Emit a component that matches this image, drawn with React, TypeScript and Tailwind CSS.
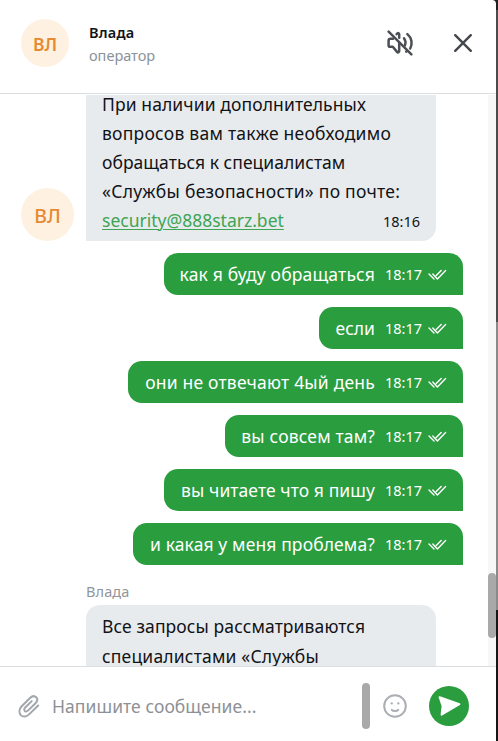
import type { ReactNode } from 'react';

interface OutgoingMessage {
  text: string;
  box: string;
  tracking: string;
}

const outgoing: OutgoingMessage[] = [
  { text: 'как я буду обращаться', box: 'w-[299px]', tracking: 'tracking-[0.17px]' },
  { text: 'если', box: 'w-[144px]', tracking: 'tracking-[0px]' },
  { text: 'они не отвечают 4ый день', box: 'w-[335px]', tracking: 'tracking-[0.2px]' },
  { text: 'вы совсем там?', box: 'w-[238px]', tracking: 'tracking-[0.16px]' },
  { text: 'вы читаете что я пишу', box: 'w-[299px]', tracking: 'tracking-[0.08px]' },
  { text: 'и какая у меня проблема?', box: 'w-[330px]', tracking: 'tracking-[0.12px]' },
];

function Line({ tracking, children }: { tracking: string; children: ReactNode }) {
  return <span className={`block whitespace-nowrap ${tracking}`}>{children}</span>;
}

function ReadMark() {
  return (
    <svg width="19" height="12" viewBox="0 0 19 12" fill="none" stroke="white" strokeWidth="1.4" strokeLinecap="round" strokeLinejoin="round">
      <path d="M1 5 6 10 M4.8 5 9.4 10 17.6 1.4 M8.2 6.6 13.2 1.6" />
    </svg>
  );
}

function MutedIcon() {
  return (
    <svg width="28" height="28" viewBox="0 0 28 28" fill="none" stroke="#4b4e54" strokeWidth="2.5" strokeLinecap="round" strokeLinejoin="round">
      <path d="M2.6 2.6 25.4 25.4" />
      <path d="M7 9.8H4.2C3.2 9.8 2.6 10.4 2.6 11.4V16.2C2.6 17.2 3.2 17.8 4.2 17.8H6.8L11 22.9C11.8 23.8 13.2 23.4 13.2 22.1V13.8" />
      <path d="M10.6 5.1 11.4 4.4C12.3 3.7 13.2 4.3 13.2 5.5V8.7" />
      <path d="M18 9.3C19.4 11.1 19.8 14.1 19 16.3" />
      <path d="M21.4 5.1C26 8.9 26.6 15.1 24.2 19.5 M20.8 22.1 20.2 22.7" />
    </svg>
  );
}

function ClipIcon() {
  return (
    <svg width="22" height="24" viewBox="0 0 22 24" fill="none" stroke="#a3a7ab" strokeWidth="2" strokeLinecap="round" strokeLinejoin="round">
      <path d="M20.2 11.5 11.3 20.1C8.6 22.7 5.1 23.3 2.8 21.1 .8 18.8 1.1 15.1 3.5 12.5L12 4C14 2 16.5 1.6 18.2 3.3 19.8 4.9 19.4 7.3 17.5 9.2L10.2 16.4C9.1 17.5 7.7 17.7 6.8 16.9 5.9 16 6.1 14.6 7.2 13.5L13.7 7.1" />
    </svg>
  );
}

export default function App() {
  return (
    <div className="flex h-[741px] w-[498px] overflow-hidden bg-[#202020] font-['Noto_Sans',sans-serif] text-[#111316]">
      <div className="flex w-[496px] flex-col rounded-tr-[4px] bg-white">
        <header className="flex h-[94px] shrink-0 items-center border-b border-[#dcdfe2] pr-[23px] pb-[7px] pl-[21px]">
          <div className="flex size-[48px] items-center justify-center rounded-full bg-[#fff1e2] pt-[3px] text-[17.5px] font-semibold text-[#e58a32]">ВЛ</div>
          <div className="ml-5 flex-1">
            <p className="pt-px text-[14.5px] leading-[22px] font-semibold tracking-[0.2px]">Влада</p>
            <p className="pt-px text-[14.5px] leading-[22px] text-[#8b9299]">оператор</p>
          </div>
          <MutedIcon />
          <svg className="ml-[39px]" width="20" height="20" viewBox="0 0 20 20" fill="none" stroke="#44474d" strokeWidth="2.4" strokeLinecap="round">
            <path d="M2.2 2.2 17.8 17.8 M17.8 2.2 2.2 17.8" />
          </svg>
        </header>

        <main className="mt-px flex h-[571px] shrink-0 overflow-hidden">
          <div className="-mt-[10px] w-[488px] pr-[25px] pl-[21px]">
            <div className="flex items-end">
              <div className="flex size-[53px] items-center justify-center rounded-full bg-[#fff1e2] pt-[2px] text-[19.5px] font-medium text-[#e58a32]">ВЛ</div>
              <div className="ml-3 w-[350px] rounded-br-[14px] bg-[#e8ebee] px-4 pt-[5px] pb-[6px] text-[17.5px] leading-[29px]">
                <Line tracking="tracking-[0.1px]">При наличии дополнительных</Line>
                <Line tracking="tracking-[0.24px]">вопросов вам также необходимо</Line>
                <Line tracking="tracking-[0.04px]">обращаться к специалистам</Line>
                <Line tracking="tracking-[0.26px]">«Службы безопасности» по почте:</Line>
                <div className="flex justify-between">
                  <span className="text-[#3da553] underline decoration-1 underline-offset-2">security@888starz.bet</span>
                  <span className="pt-px text-[14.5px] leading-[28px]">18:16</span>
                </div>
              </div>
            </div>

            <div className="mt-3 flex flex-col items-end gap-3">
              {outgoing.map((message) => (
                <div
                  key={message.text}
                  className={`flex h-[42px] items-center justify-end rounded-t-[14px] rounded-bl-[14px] bg-[#2a9d3f] pt-px pr-[15px] text-[17.5px] whitespace-nowrap text-white ${message.box}`}
                >
                  <span className={message.tracking}>{message.text}</span>
                  <span className="ml-[10px] w-[38px] pt-px text-[14.5px]">18:17</span>
                  <span className="ml-[5px] mr-px pt-px">
                    <ReadMark />
                  </span>
                </div>
              ))}
            </div>

            <div className="ml-[65px] pt-[15px]">
              <p className="text-[14.5px] leading-[22px] tracking-[0.1px] text-[#91969b]">Влада</p>
              <div className="mt-[3px] w-[350px] rounded-t-[14px] bg-[#e8ebee] px-4 pt-[6px] pb-[40px] text-[17.5px] leading-[30px]">
                <Line tracking="tracking-[0.1px]">Все запросы рассматриваются</Line>
                <Line tracking="tracking-[0.19px]">специалистами «Службы</Line>
              </div>
            </div>
          </div>
          <div className="w-2 bg-[#f7f7f7] pt-[478px]">
            <div className="h-[65px] rounded-full bg-[#a9a9a9]" />
          </div>
        </main>

        <footer className="flex flex-1 items-center border-t border-[#dcdfe2] pt-1 pr-[27px] pl-[18px]">
          <ClipIcon />
          <p className="ml-[12px] flex-1 text-[17.5px] tracking-[0.06px] text-[#8d9196]">Напишите сообщение...</p>
          <div className="h-[46px] w-2 rounded-full bg-[#a9a9a9]" />
          <svg className="ml-[13px]" width="24" height="24" viewBox="0 0 24 24" fill="none" stroke="#abaeb2" strokeWidth="2" strokeLinecap="round">
            <circle cx="12" cy="12" r="10.8" />
            <path d="M8.8 15.8C10 17.3 14 17.3 15.2 15.8" />
            <path d="M8.6 9.4h.2 M15.2 9.4h.2" strokeWidth="2.2" />
          </svg>
          <div className="ml-[22px] flex size-10 items-center justify-center rounded-full bg-[#2a9d3f]">
            <svg width="24" height="22" viewBox="0 0 24 22" fill="white" stroke="white" strokeWidth="2" strokeLinejoin="round">
              <path d="M2.6 2.2 22.4 9.2 4.6 19.6 5.6 11Z" />
            </svg>
          </div>
        </footer>
      </div>
      <div className="flex w-[2px] flex-col">
        <div className="h-[10px] bg-[#202020]" />
        <div className="h-[312px] bg-[#4b4b4b]" />
        <div className="h-[288px] bg-[#8a8a8a]" />
        <div className="flex-1 bg-[#161616]" />
      </div>
    </div>
  );
}
